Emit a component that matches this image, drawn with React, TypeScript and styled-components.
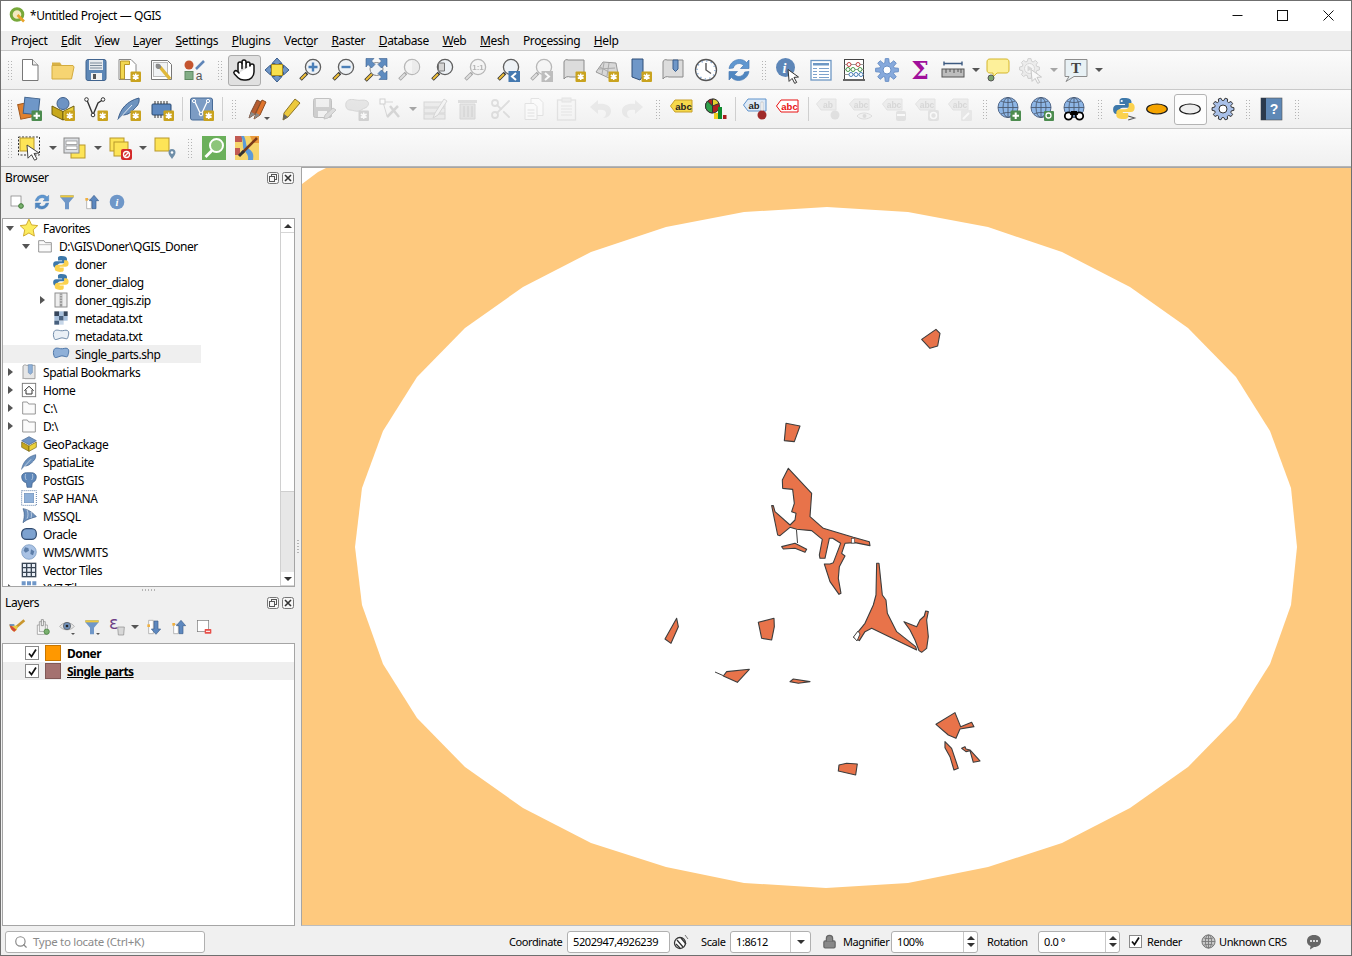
import React from "react";
import styled, { createGlobalStyle } from "styled-components";
import { Hand, Search, Lock, Scissors } from "lucide-react";

const uiFont = `"Noto Sans", "Open Sans", "Liberation Sans", sans-serif`;

const GlobalStyle = createGlobalStyle`
  html, body { margin: 0; padding: 0; background: #f0f0f0; }
  body { font-family: ${uiFont}; font-size: 12px; color: #000; }
  * { box-sizing: border-box; }
`;

// gear outline used by the toolbox, settings and action icons
const gearPath = (cx: number, cy: number, R: number, r: number, n: number) => {
  const pts: string[] = [];
  for (let i = 0; i < n; i++) {
    const a = (i / n) * Math.PI * 2;
    const w = (Math.PI / n) * 0.55;
    [
      [a - w * 1.3, r],
      [a - w * 0.7, R],
      [a + w * 0.7, R],
      [a + w * 1.3, r],
    ].forEach(([t, d]) => {
      pts.push(`${(cx + Math.cos(t) * d).toFixed(2)} ${(cy + Math.sin(t) * d).toFixed(2)}`);
    });
  }
  return `M${pts.join("L")}Z`;
};

const Star = () => (
  <>
    <rect x="13.5" y="13.5" width="10.5" height="10.5" rx="1" fill="#c9a31f" />
    <path d="M18.7 15.5v6.5M15.8 17l5.8 3.5M21.6 17l-5.8 3.5" stroke="#fff" strokeWidth="1.5" />
  </>
);

const Plus = () => (
  <>
    <rect x="13.5" y="13.5" width="10.5" height="10.5" rx="1" fill="#4c8c4f" />
    <path d="M18.7 15.5v6.5M15.5 18.7h6.5" stroke="#fff" strokeWidth="2" />
  </>
);

const Lens = ({ children }: { children?: React.ReactNode }) => (
  <>
    <path d="M9 15L2.5 21.5" stroke="#333" strokeWidth="3.6" />
    <path d="M8 16L3 21" stroke="#eebf3a" strokeWidth="2" />
    <circle cx="15" cy="9" r="7.6" fill="#eef2f6" stroke="#5f5f5f" strokeWidth="1.3" />
    {children}
  </>
);

const Sheet = () => (
  <path d="M2 4c0-2 3-3 4-2h16v17H8c-2-1-5 0-6 2z" fill="#dcdcdc" stroke="#8a8a8a" />
);

const Globe = () => (
  <>
    <circle cx="11" cy="10.5" r="10" fill="#8db6e6" stroke="#52688a" />
    <path d="M1 10.5h20M11 .5v20M4 4c4 2 10 2 14 0M4 17c4-2 10-2 14 0" stroke="#4b5a70" strokeWidth=".9" fill="none" />
    <ellipse cx="11" cy="10.5" rx="5" ry="10" fill="none" stroke="#4b5a70" strokeWidth=".9" />
  </>
);

const Tag = ({ text, fill, line, ink }: { text: string; fill: string; line: string; ink: string }) => (
  <>
    <path d="M.5 9L5 3h17v12H5z" fill={fill} stroke={line} />
    <text x="13.5" y="12.6" fontSize="9.5" fontWeight="700" textAnchor="middle" fill={ink} fontFamily="Liberation Sans">
      {text}
    </text>
  </>
);

const GrayTag = ({ text }: { text: string }) => (
  <>
    <path d="M.5 7L5 2h15v11H5z" fill="#ddd" stroke="#c6c6c6" />
    <text x="12" y="10.6" fontSize="8.5" fontWeight="700" textAnchor="middle" fill="#aaa" fontFamily="Liberation Sans">
      {text}
    </text>
  </>
);

const snake = "M11.5 1C6.5 1 7 3 7 5v2h5v1H4.5C2.5 8 1 9.5 1 12.5S2.5 17 4 17h2.5v-3c0-2 1.5-3.3 3.500-3.3h4.5c2 0 3.5-1.5 3.5-3.2V4.800C18 2.5 16 1 11.5 1z";

const cursor = "M12 11.5l10.5 7.500-4.500.4 2.700 5-2 1-2.600-5-3 3z";
const arrows = "M2 10.5C3 5 7.500 1.500 12.500 1.500c3 0 5.200 1 7 3l2.500-2.500v8.500h-8.500l3-3c-1.200-1.200-2.700-2-4.300-2-3 0-5.200 1.900-5.900 4.500z";

const icons: Record<string, React.ReactNode> = {
  new: (
    <>
      <path d="M4.5 1.5h10L20 7v15.5H4.5z" fill="#fff" stroke="#777" />
      <path d="M14.5 1.5V7H20" fill="#eee" stroke="#777" />
    </>
  ),
  open: (
    <>
      <path d="M1 4.5h8l2 3h11v5H1z" fill="#d8b146" />
      <path d="M1 21V7.5h21L23 9 20.5 21z" fill="#f6d472" stroke="#d2ab3f" />
    </>
  ),
  save: (
    <>
      <rect x="2" y="1.5" width="20" height="21" rx="2" fill="#5d87b6" stroke="#41648f" />
      <rect x="5" y="2" width="14" height="10" fill="#e6eaee" />
      <path d="M6 5h12M6 7.5h12M6 10h12" stroke="#7a8a9a" />
      <rect x="7" y="15" width="11" height="7" fill="#f2f2f2" />
      <rect x="9" y="16" width="3" height="5" fill="#555" />
    </>
  ),
  layout: (
    <>
      <path d="M2 1.5h12l5 5v15H2z" fill="#fff" stroke="#888" />
      <path d="M3.5 3h9v3.5h-5V21h-4z" fill="#f2d750" stroke="#b8962a" />
      <Star />
    </>
  ),
  layoutMgr: (
    <>
      <path d="M1.5 2.5h16l4 4v15h-20z" fill="#fff" stroke="#777" />
      <rect x="3.5" y="4.5" width="14" height="14" fill="#f1f3f5" stroke="#bbb" />
      <path d="M10 9l10 12" stroke="#e0b83a" strokeWidth="3.5" />
      <path d="M6 6c2-1 6 0 5 4l-2 1c-3 0-4-2-3-5z" fill="#8a8a8a" />
    </>
  ),
  style: (
    <>
      <circle cx="6" cy="7" r="4.5" fill="#c4552f" />
      <path d="M13 11L21 3" stroke="#5f86b8" strokeWidth="2.5" />
      <rect x="2" y="13.5" width="8" height="8" fill="#82ad86" stroke="#5e8a62" />
      <text x="16" y="22" fontSize="12" fill="#555" textAnchor="middle" fontFamily="Liberation Sans">a</text>
    </>
  ),
  hand: <Hand width={24} height={24} fill="#fff" stroke="#111" strokeWidth={1.5} />,
  panSel: (
    <>
      <path d="M12 0l5 5.500h-3V8h-4V5.500H7zM12 24l5-5.500h-3V16h-4v2.500H7zM0 12l5.500-5v3H8v4H5.500v3zM24 12l-5.500-5v3H16v4h2.500v3z" fill="#6e95c6" stroke="#3d5f8c" />
      <rect x="6.5" y="6.5" width="11" height="11" fill="#f7e04e" stroke="#a88c20" />
    </>
  ),
  zoomIn: (
    <Lens>
      <path d="M10.5 9h9M15 4.500v9" stroke="#4a7fb8" strokeWidth="2.400" />
    </Lens>
  ),
  zoomOut: (
    <Lens>
      <path d="M10.5 9h9" stroke="#4a7fb8" strokeWidth="2.400" />
    </Lens>
  ),
  zoomFull: (
    <>
      <path d="M9 15L1.5 22.5" stroke="#333" strokeWidth="3.5" />
      <path d="M8 16L2 22" stroke="#eebf3a" strokeWidth="2" />
      <circle cx="12.5" cy="11" r="6.5" fill="#eef2f6" stroke="#888" />
      <path d="M2 .5h8L7.500 3l3.500 3.500L7.500 10 4 6.500 2 9zM23 .5h-8l2.500 2.500L14 6.500l3.500 3.500L21 6.500 23 9zM23 21.500h-8l2.500-2.500L14 15.500l3.500-3.500L21 15.500l2-2.500z" fill="#5f8cc0" stroke="#3a5f8e" strokeWidth=".6" />
    </>
  ),
  zoomSel: (
    <Lens>
      <path d="M15 2a7 7 0 0 1 0 14z" fill="#ffe04a" />
    </Lens>
  ),
  zoomLayer: (
    <Lens>
      <path d="M8.5 5h6v8h-6z" fill="#d5d5d5" stroke="#777" />
    </Lens>
  ),
  native: (
    <Lens>
      <text x="15" y="12" fontSize="8" fontWeight="700" textAnchor="middle" fill="#555" fontFamily="Liberation Sans">1:1</text>
    </Lens>
  ),
  zoomLast: (
    <Lens>
      <rect x="12.5" y="13" width="11.5" height="11" fill="#4579b0" />
      <path d="M20 15l-4 3.500 4 3.500" stroke="#fff" strokeWidth="2" fill="none" />
    </Lens>
  ),
  zoomNext: (
    <Lens>
      <rect x="12.5" y="13" width="11.5" height="11" fill="#4579b0" />
      <path d="M16 15l4 3.500-4 3.500" stroke="#fff" strokeWidth="2" fill="none" />
    </Lens>
  ),
  mapView: (
    <>
      <Sheet />
      <Star />
    </>
  ),
  map3d: (
    <>
      <path d="M1 14L8 4l13 1 2 11-9 4z" fill="#d8d8d8" stroke="#999" />
      <path d="M5 9l14 8M9 5l-2 11M14 5l-2 13M20 10l-16 1" stroke="#aaa" fill="none" />
      <Star />
    </>
  ),
  bookmarkNew: (
    <>
      <path d="M4 1h11v17l-3 4-8-3z" fill="#6f97c8" stroke="#2f4e78" />
      <Star />
    </>
  ),
  bookmarks: (
    <>
      <Sheet />
      <path d="M12 2h5v9l-2.500 2.500L12 11z" fill="#6f97c8" stroke="#3a5f8e" />
    </>
  ),
  clock: (
    <>
      <circle cx="12" cy="12" r="10.5" fill="#fff" stroke="#555" strokeWidth="1.3" />
      <circle cx="12" cy="12" r="9" fill="none" stroke="#6f97c8" strokeWidth="1.2" strokeDasharray="1.2 3.5" />
      <path d="M12 5v7l5 3.500" stroke="#555" strokeWidth="1.4" fill="none" />
    </>
  ),
  refresh: (
    <>
      <path d={arrows} fill="#5f97d0" stroke="#4a7db6" strokeWidth=".7" />
      <path d={arrows} fill="#4f86c0" stroke="#4a7db6" strokeWidth=".7" transform="rotate(180 12 12)" />
    </>
  ),
  identify: (
    <>
      <circle cx="9.5" cy="9.5" r="9.5" fill="#5d86b8" />
      <text x="8.5" y="14.5" fontSize="14" fontWeight="700" fontStyle="italic" textAnchor="middle" fill="#fff" fontFamily="Liberation Serif">i</text>
      <path d={cursor} fill="#fff" stroke="#333" />
    </>
  ),
  table: (
    <>
      <rect x="2" y="2.5" width="20" height="19.5" fill="#fff" stroke="#6d97c4" strokeWidth="1.3" />
      <rect x="4" y="5" width="16" height="2.5" fill="#6d97c4" />
      <path d="M4 10.5h4M10 10.5h10M4 13.5h4M10 13.5h10M4 16.5h4M10 16.5h10M4 19.5h4M10 19.5h10" stroke="#7da2cc" />
    </>
  ),
  abacus: (
    <>
      <rect x="2.5" y="1.5" width="19" height="20" fill="#fff" stroke="#444" />
      <rect x="1" y="21" width="22" height="2" fill="#666" />
      <path d="M2.5 6.500h19M2.5 11.500h19M2.5 16.500h19" stroke="#999" />
      <circle cx="7" cy="6.5" r="2" fill="#fff" stroke="#c04040" />
      <circle cx="16" cy="6.5" r="2" fill="#fff" stroke="#c04040" />
      <circle cx="6" cy="11.5" r="2" fill="#fff" stroke="#4a9a4a" />
      <circle cx="11" cy="11.5" r="2" fill="#fff" stroke="#4a9a4a" />
      <circle cx="18" cy="11.5" r="2" fill="#fff" stroke="#4a9a4a" />
      <circle cx="9" cy="16.5" r="2" fill="#fff" stroke="#4a7fb8" />
      <circle cx="14" cy="16.5" r="2" fill="#fff" stroke="#4a7fb8" />
      <circle cx="19" cy="16.5" r="2" fill="#fff" stroke="#4a7fb8" />
    </>
  ),
  toolbox: (
    <>
      <path d={gearPath(12, 12, 11.5, 7.5, 8)} fill="#86a9dc" stroke="#6a90c6" />
      <circle cx="12" cy="12" r="4" fill="#fff" stroke="#6a90c6" />
    </>
  ),
  sum: (
    <text x="12" y="21" fontSize="25" fontWeight="700" textAnchor="middle" fill="#a0109b" fontFamily="DejaVu Serif">Σ</text>
  ),
  measure: (
    <>
      <path d="M3 5.500h18M3 3.500v4M21 3.500v4" stroke="#3c5a80" strokeWidth="1.4" />
      <rect x="1" y="11" width="22" height="8" fill="#bdbdbd" stroke="#555" />
      <path d="M5 11v4M9 11v3M13 11v4M17 11v3M20 11v4" stroke="#555" />
    </>
  ),
  annotation: (
    <>
      <path d="M4 1h16c2 0 3 1 3 3v8c0 2-1 3-3 3H11l-4 4v-4H4c-2 0-3-1-3-3V4c0-2 1-3 3-3z" fill="#fdf09a" stroke="#d4b62a" />
      <circle cx="5" cy="20" r="3" fill="#7aa36d" stroke="#555" />
    </>
  ),
  action: (
    <>
      <path d={gearPath(10.5, 10.5, 10, 7.5, 8)} fill="#ddd" stroke="#999" />
      <circle cx="10.5" cy="10.5" r="5" fill="#f4f4f4" stroke="#aaa" />
      <path d="M8.5 7.500l5 3-5 3z" fill="#aaa" />
      <path d={cursor} fill="#fff" stroke="#888" />
    </>
  ),
  textAnn: (
    <>
      <path d="M1 1.500h22v17H10l-8 5 3-5H1z" fill="#e8f1f5" stroke="#8c8c8c" />
      <text x="12" y="15" fontSize="15" fontWeight="700" textAnchor="middle" fill="#444" fontFamily="Liberation Serif">T</text>
    </>
  ),
  dataSource: (
    <>
      <rect x="1" y="6" width="15" height="15" fill="#e0812f" stroke="#a0561a" transform="rotate(-12 8 13)" />
      <rect x="6" y="1" width="15" height="16" fill="#6f97c8" stroke="#3f628c" transform="rotate(6 13 9)" />
      <Plus />
    </>
  ),
  newGpkg: (
    <>
      <circle cx="12" cy="6.5" r="6" fill="#6d93c4" stroke="#3f5f8a" />
      <path d="M1 9l11 5.500V23L1 17.500z" fill="#c7a81c" stroke="#6e5d10" />
      <path d="M23 9l-11 5.500V23l11-5.500z" fill="#ecd23c" stroke="#6e5d10" />
      <Star />
    </>
  ),
  newVector: (
    <>
      <path d="M2.500 2l6.500 16L14 6l4.500-3" stroke="#333" strokeWidth="1.4" fill="none" />
      <circle cx="2.5" cy="2.5" r="1.8" fill="#fff" stroke="#333" />
      <circle cx="9" cy="18" r="1.8" fill="#fff" stroke="#333" />
      <circle cx="19" cy="2.5" r="1.8" fill="#fff" stroke="#333" />
      <Star />
    </>
  ),
  feather: (
    <>
      <path d="M1 23C3 12 10 4 22 1c1 6-3 9-5 11-4 5-8 6-12 6z" fill="#6d93bf" stroke="#3d5f8c" />
      <path d="M1 23L15 8" stroke="#dfe8f2" />
    </>
  ),
  featherNew: (
    <>
      <path d="M1 23C3 12 10 4 22 1c1 6-3 9-5 11-4 5-8 6-12 6z" fill="#6d93bf" stroke="#3d5f8c" />
      <path d="M1 23L15 8" stroke="#dfe8f2" />
      <Star />
    </>
  ),
  chip: (
    <>
      <rect x="2" y="7" width="19" height="11" rx="1" fill="#5d88bf" stroke="#2b4a73" />
      <path d="M5 4v3M8 4v3M11 4v3M14 4v3M17 4v3M5 18v3M8 18v3M11 18v3" stroke="#333" />
      <Star />
    </>
  ),
  digitize: (
    <>
      <rect x=".5" y="1" width="22" height="22" rx="2" fill="#7c9cc4" stroke="#466a96" />
      <path d="M4 3l7 15 7-15" stroke="#fff" strokeWidth="1.3" fill="none" />
      <circle cx="4" cy="4" r="1.6" fill="#7c9cc4" stroke="#fff" />
      <circle cx="11" cy="17" r="1.8" fill="#7c9cc4" stroke="#fff" />
      <circle cx="18" cy="4" r="1.6" fill="#7c9cc4" stroke="#fff" />
      <Star />
    </>
  ),
  pencils: (
    <>
      <path d="M3 21l2-6L11 3l4 2-6 12z" fill="#b75d30" stroke="#7a4a30" />
      <path d="M8 22l2-6 6-13 4 2-6 13z" fill="#e0742c" stroke="#8a4a20" />
      <path d="M3 21l2-6 4 2zM8 22l2-6 4 2z" fill="#8a8a8a" />
      <path d="M18 20h6l-3 3z" fill="#555" />
    </>
  ),
  pencil: (
    <>
      <path d="M4 23l1-7L16 2l5 4L9 20z" fill="#ecc93c" stroke="#8c7426" />
      <path d="M4 23l1-6 4 3z" fill="#666" />
    </>
  ),
  saveEdits: (
    <>
      <rect x="1.5" y="1.5" width="18" height="19" rx="2" fill="#999" stroke="#777" />
      <rect x="4" y="2" width="13" height="8" fill="#e4e4e4" />
      <rect x="6" y="14" width="9" height="6" fill="#eee" />
      <path d="M12 22l1-4 8-7 3 2-8 8z" fill="#bbb" stroke="#888" />
    </>
  ),
  addFeature: (
    <>
      <path d="M1 6c1-4 6-4 10-3s8-1 11 1 1 6-2 7-3 2-6 3-6-1-9-1-5-3-4-7z" fill="#ccc" stroke="#aaa" />
      <Star />
    </>
  ),
  vertex: (
    <>
      <path d="M5 5l4 14M5 5h10" stroke="#aaa" fill="none" />
      <rect x="2" y="2" width="5" height="5" fill="#fff" stroke="#999" />
      <path d="M9 20L20 9M12 9l9 11" stroke="#aaa" strokeWidth="2.5" />
    </>
  ),
  modify: (
    <>
      <rect x="1" y="5" width="21" height="5" fill="#ddd" stroke="#aaa" />
      <rect x="1" y="11" width="21" height="5" fill="#ddd" stroke="#aaa" />
      <rect x="1" y="17" width="21" height="5" fill="#ddd" stroke="#aaa" />
      <path d="M10 21l2-5L21 2l3 2-9 14z" fill="#eee" stroke="#aaa" />
    </>
  ),
  trash: (
    <>
      <path d="M2 3h19v3H2z" fill="#c7b9b4" />
      <path d="M4 7h15v15H4z" fill="#d4c9c5" stroke="#b8aaa5" />
      <path d="M8 9v11M12 9v11M16 9v11" stroke="#a89a95" />
    </>
  ),
  cut: <Scissors width={24} height={24} stroke="#bbb" strokeWidth={1.8} />,
  copy: (
    <>
      <path d="M9 1.500h8l4 4v13H9z" fill="#fff" stroke="#c6c6c6" />
      <path d="M3 6.500h9l3 3v13H3z" fill="#fff" stroke="#c6c6c6" />
      <path d="M5.500 13h7M5.500 16h7M5.500 19h7" stroke="#c6c6c6" />
    </>
  ),
  paste: (
    <>
      <rect x="2.5" y="3" width="18" height="20" fill="#f4f4f4" stroke="#c6c6c6" strokeWidth="1.3" />
      <rect x="7" y="1" width="9" height="4" fill="#ddd" stroke="#c6c6c6" />
      <path d="M6 9h11M6 12h11M6 15h11M6 18h11" stroke="#ccc" />
    </>
  ),
  undo: <path d="M10 3L2 10l8 7v-4c4-1 8 0 8 3 0 2-1 4-3 5 5 0 8-3 8-7 0-6-7-8-13-7z" fill="#d6d6d6" />,
  redo: <path d="M14 3l8 7-8 7v-4c-4-1-8 0-8 3 0 2 1 4 3 5-5 0-8-3-8-7 0-6 7-8 13-7z" fill="#d6d6d6" />,
  abc: <Tag text="abc" fill="#f6d94b" line="#c8a02a" ink="#222" />,
  chart: (
    <>
      <circle cx="9.5" cy="9" r="7" fill="#b02020" stroke="#333" />
      <path d="M9.500 9V2a7 7 0 0 1 6.500 4.500z" fill="#e2d431" stroke="#333" />
      <path d="M9.500 9v7a7 7 0 0 1-7-7 7 7 0 0 1 2-5z" fill="#2fa04a" stroke="#333" />
      <rect x="11" y="16" width="4" height="6" fill="#f0d020" />
      <rect x="15" y="10" width="4" height="12" fill="#0e8a2e" />
      <rect x="20" y="18" width="3.5" height="4" fill="#a81e1e" />
    </>
  ),
  abPin: (
    <>
      <path d="M.5 8L5 2h18v12H5z" fill="#dfeaf6" stroke="#5f93cc" />
      <text x="11" y="11.5" fontSize="9.5" fontWeight="700" textAnchor="middle" fill="#222" fontFamily="Liberation Sans">ab</text>
      <path d="M18 5h2v10h-2z" fill="#fff" stroke="#aaa" strokeWidth=".5" />
      <circle cx="19" cy="18" r="4.5" fill="#a02a2a" />
    </>
  ),
  abcRed: <Tag text="abc" fill="#fff" line="#e81010" ink="#e81010" />,
  abGrayPin: (
    <>
      <GrayTag text="ab" />
      <circle cx="19" cy="18" r="4.5" fill="#c8c2c2" />
    </>
  ),
  abcEye: (
    <>
      <GrayTag text="abc" />
      <path d="M8 19c3-4 11-4 15 0-4 4-12 4-15 0z" fill="#eee" stroke="#bbb" />
      <circle cx="15.5" cy="19" r="2" fill="#bbb" />
    </>
  ),
  abcPlus: (
    <>
      <GrayTag text="abc" />
      <rect x="14" y="14" width="10" height="10" rx="2" fill="#c8c8c8" />
      <path d="M15 18h8" stroke="#fff" strokeWidth="2" />
    </>
  ),
  abcTurn: (
    <>
      <GrayTag text="abc" />
      <rect x="13" y="13" width="11" height="11" rx="2" fill="#c8c8c8" />
      <circle cx="18.5" cy="18.5" r="3" fill="none" stroke="#fff" strokeWidth="1.5" />
    </>
  ),
  abcEdit: (
    <>
      <GrayTag text="abc" />
      <rect x="13" y="13" width="11" height="11" rx="1" fill="#d8d4c8" />
      <path d="M15 22l6-6" stroke="#fff" strokeWidth="2" />
    </>
  ),
  wmsAdd: (
    <>
      <Globe />
      <Plus />
    </>
  ),
  wmsFind: (
    <>
      <Globe />
      <rect x="14" y="14" width="10" height="10" rx="1" fill="#4c8c4f" />
      <circle cx="18.5" cy="18.5" r="2.5" fill="none" stroke="#fff" strokeWidth="1.3" />
    </>
  ),
  wmsSearch: (
    <>
      <Globe />
      <circle cx="5.5" cy="19" r="3.7" fill="#fff" stroke="#000" strokeWidth="1.8" />
      <circle cx="16.5" cy="19" r="3.7" fill="#fff" stroke="#000" strokeWidth="1.8" />
      <path d="M8 14h6l1 4H7z" fill="#000" />
    </>
  ),
  python: (
    <g transform="scale(1.08 1)">
      <path d={snake} fill="#3d78aa" />
      <path d={snake} fill="#fbd24e" transform="rotate(180 11 11.5)" />
      <circle cx="9" cy="4" r="1" fill="#fff" />
      <path d="M15 19l6 2-6 2" stroke="#555" fill="none" />
    </g>
  ),
  ellipseOn: <ellipse cx="12" cy="12" rx="10.3" ry="5" fill="#f5a400" stroke="#1a1a1a" strokeWidth="1.2" />,
  ellipseOff: <ellipse cx="12" cy="12" rx="10.3" ry="5" fill="#eee" stroke="#1a1a1a" strokeWidth="1.2" />,
  settings: (
    <>
      <path d={gearPath(12, 12, 11, 8.5, 10)} fill="#a9c0e8" stroke="#333" />
      <circle cx="12" cy="12" r="4" fill="#fff" stroke="#333" />
    </>
  ),
  help: (
    <>
      <rect x="1" y="1" width="21" height="22" fill="#5e88b6" stroke="#555" strokeWidth=".6" />
      <rect x="1" y="1" width="5" height="22" fill="#2b3a4d" />
      <text x="14" y="17" fontSize="14" fontWeight="700" textAnchor="middle" fill="#fff" fontFamily="Liberation Sans">?</text>
    </>
  ),
  select: (
    <>
      <rect x=".5" y="1" width="21" height="18" fill="none" stroke="#333" strokeDasharray="2 1.5" />
      <rect x="2" y="2" width="14" height="13" fill="#fde457" stroke="#b8982a" />
      <path d="M9 9l12 8-5 .5 3 5.500-2.500 1.200-3-5.500-3.500 3.500z" fill="#fff" stroke="#444" />
    </>
  ),
  selectForm: (
    <>
      <rect x="8" y="9" width="14" height="13" fill="#fde457" stroke="#b8982a" />
      <rect x="1" y="2" width="15" height="15" fill="#dcdfe3" stroke="#888" />
      <rect x="3" y="5" width="11" height="3.5" fill="#fff" stroke="#888" strokeWidth=".7" />
      <rect x="3" y="10" width="11" height="3.5" fill="#fff" stroke="#888" strokeWidth=".7" />
    </>
  ),
  deselect: (
    <>
      <rect x="2" y="2" width="14" height="13" fill="#fde457" stroke="#b8982a" />
      <rect x="6" y="6" width="14" height="14" fill="#fde457" stroke="#b8982a" />
      <rect x="13" y="13" width="11" height="11" rx="2" fill="#d42a2a" />
      <circle cx="18.5" cy="18.5" r="3" fill="none" stroke="#fff" strokeWidth="1.3" />
      <path d="M16.500 20.500l4-4" stroke="#fff" strokeWidth="1.3" />
    </>
  ),
  selectLoc: (
    <>
      <rect x="2" y="2" width="14" height="13" fill="#fde457" stroke="#b8982a" />
      <path d="M19 23c-2-3-3.500-4.500-3.500-6.500a3.500 3.500 0 0 1 7 0c0 2-1.500 3.500-3.500 6.500z" fill="#6f8ea8" />
      <circle cx="19" cy="16.5" r="1.3" fill="#fff" />
    </>
  ),
  locator: (
    <>
      <rect width="24" height="24" fill="#6bb05b" />
      <circle cx="14.5" cy="9.5" r="6.5" fill="#8dc57a" stroke="#fff" strokeWidth="2" />
      <path d="M10 14.500L3.500 21" stroke="#fff" strokeWidth="2.8" />
    </>
  ),
  mapEdit: (
    <>
      <rect width="24" height="24" fill="#f6d56b" />
      <path d="M0 0h7v6H0zM0 12h5v7H0z" fill="#c15a52" />
      <path d="M9 0c3 6 1 10 5 13s5 5 4 11h-5c1-5-2-7-4-10S9 5 6 0z" fill="#5c9bd8" />
      <path d="M15 0h9v7h-6z" fill="#e99a3c" />
      <path d="M7 17L22 2" stroke="#7a3a1a" strokeWidth="2.6" />
      <path d="M9 15l-5 5" stroke="#333" strokeWidth="3" />
    </>
  ),
  addSmall: (
    <>
      <rect x="3" y="3" width="15" height="15" fill="#fff" stroke="#777" />
      <circle cx="18" cy="18" r="3.5" fill="#7ab06f" stroke="#3d7a34" strokeWidth="1.5" />
    </>
  ),
  filter: (
    <>
      <path d="M2 2h20v3l-7 8v10h-6V13L2 5z" fill="#6f97c8" />
      <path d="M2 2h20v3H2z" fill="#f0c93a" />
    </>
  ),
  collapse: (
    <>
      <path d="M4 8h7v14H4z" fill="#fff" stroke="#999" />
      <path d="M15 2l7 8h-4v12h-6V10H8z" fill="#5d88bf" stroke="#3d5f8c" />
      <rect x="2" y="6" width="4" height="4" fill="#f0b040" />
    </>
  ),
  expand: (
    <>
      <path d="M4 2h7v20H4z" fill="#fff" stroke="#999" />
      <path d="M15 23l7-8h-4V3h-6v12H8z" fill="#5d88bf" stroke="#3d5f8c" />
      <rect x="2" y="8" width="4" height="4" fill="#f0b040" />
    </>
  ),
  info: (
    <>
      <circle cx="12" cy="12" r="11" fill="#6f97c8" />
      <text x="12" y="18" fontSize="16" fontWeight="700" fontStyle="italic" textAnchor="middle" fill="#fff" fontFamily="Liberation Serif">i</text>
    </>
  ),
  brush: (
    <>
      <path d="M23 2L11 12" stroke="#c9962e" strokeWidth="4" />
      <path d="M13 11L1 8c-1 4 3 10 7 11l4-3z" fill="#e8cb42" />
      <path d="M1 8l10 8-3 3C4 18 1 12 1 8z" fill="#d24a3a" />
      <path d="M8 9l-7 0" stroke="#5d88bf" strokeWidth="2.5" />
    </>
  ),
  addGroup: (
    <>
      <path d="M5 9h15v14H5z" fill="#fff" stroke="#888" />
      <path d="M8 4h9v15H8z" fill="#eee" stroke="#888" />
      <path d="M11 1h3v9h-3z" fill="#fff" stroke="#666" />
      <circle cx="19" cy="19" r="4" fill="#7ab06f" stroke="#3d7a34" />
    </>
  ),
  eye: (
    <>
      <path d="M1 11c5-7 17-7 22 0-5 7-17 7-22 0z" fill="#e6e6e6" stroke="#999" />
      <circle cx="12" cy="10.5" r="5.5" fill="#6f8fb8" stroke="#555" />
      <circle cx="12" cy="10.5" r="2" fill="#222" />
      <path d="M18 21h6l-3 3z" fill="#555" />
    </>
  ),
  filterAdv: (
    <>
      <path d="M2 2h20v3l-7 8v10h-6V13L2 5z" fill="#6f97c8" />
      <path d="M2 2h20v3H2z" fill="#f0c93a" />
      <path d="M18 21h6l-3 3z" fill="#555" />
    </>
  ),
  epsilon: (
    <>
      <text x="7" y="15" fontSize="26" textAnchor="middle" fill="#6d3f86" fontFamily="DejaVu Sans">ε</text>
      <path d="M13 12h10l-1 12h-8z" fill="#d8d8d8" stroke="#888" />
    </>
  ),
  removeLayer: (
    <>
      <rect x="2" y="2" width="17" height="17" fill="#fff" stroke="#777" />
      <rect x="13" y="15" width="10" height="7" rx="1" fill="#e8504a" />
      <path d="M15 18.500h6" stroke="#fff" strokeWidth="1.6" />
    </>
  ),
  star: (
    <path
      d="M12 1l3.300 7.200 7.700.9-5.700 5.300 1.500 7.800L12 18.300l-6.800 3.900 1.500-7.800L1 9.100l7.700-.9z"
      fill="#fcec5e"
      stroke="#d0a92a"
      strokeWidth="1.2"
      transform="translate(-2.5 -2.500) scale(1.2)"
    />
  ),
  folder: <path d="M2.500 21V3h7l2 3h10v15z" fill="#fbfbfb" stroke="#8f8f8f" strokeWidth="1.4" />,
  folderFav: (
    <>
      <path d="M2.500 21V4h8l2 3h9v14z" fill="#fbfbfb" stroke="#8f8f8f" strokeWidth="1.4" />
      <path d="M3 10h18" stroke="#bbb" strokeWidth="1.4" />
    </>
  ),
  pyFile: (
    <g transform="translate(-1 -1) scale(1.22 1.1)">
      <path d={snake} fill="#3d78aa" />
      <path d={snake} fill="#fbd24e" transform="rotate(180 10.5 11.8)" />
    </g>
  ),
  zip: (
    <>
      <rect x="3" y="1.5" width="18" height="21" fill="#eee" stroke="#888" strokeWidth="1.4" />
      <rect x="10" y="2" width="4" height="20" fill="#999" />
      <path d="M10 5h4M10 9h4M10 13h4M10 17h4" stroke="#eee" />
    </>
  ),
  raster: (
    <>
      <rect x="2" y="2" width="7" height="7" fill="#36465c" />
      <rect x="9" y="2" width="7" height="7" fill="#a8c0dc" />
      <rect x="16" y="2" width="6" height="7" fill="#36465c" />
      <rect x="2" y="9" width="7" height="7" fill="#a8c0dc" />
      <rect x="9" y="9" width="7" height="7" fill="#48607e" />
      <rect x="16" y="9" width="6" height="7" fill="#a8c0dc" />
      <rect x="2" y="16" width="7" height="6" fill="#48607e" />
      <rect x="9" y="16" width="7" height="6" fill="#c6d6e8" />
    </>
  ),
  blobPale: <path d="M1 7c1-5 6-4 10-3s8-2 11 0 1 8 0 11-6-1-10 0-9 4-10 1-2-5-1-9z" fill="#eaf0f6" stroke="#6f8aa8" strokeWidth="1.5" />,
  blob: <path d="M1 7c1-5 6-4 10-3s8-2 11 0 1 8 0 11-6-1-10 0-9 4-10 1-2-5-1-9z" fill="#8fb0d8" stroke="#4f77a8" strokeWidth="1.5" />,
  bookmarkTree: (
    <>
      <path d="M3 3c1-2 4-2 5-1h13v20H6c-2-1-4 0-3 0z" fill="#e6e6e6" stroke="#9a9a9a" strokeWidth="1.4" />
      <path d="M11 1h6v12l-3 2.500-3-2.500z" fill="#8fb0d8" stroke="#6f8fb4" />
    </>
  ),
  home: (
    <>
      <rect x="2" y="2" width="20" height="20" fill="#fff" stroke="#777" strokeWidth="1.4" />
      <path d="M5 13l7-6.500 7 6.500M7.500 12v6h9v-6" fill="none" stroke="#333" strokeWidth="1.5" />
    </>
  ),
  gpkg: (
    <>
      <path d="M12 1l11 6-11 6L1 7z" fill="#6d93c4" stroke="#3f5f8a" />
      <path d="M1 9l11 6v8L1 17z" fill="#c7a81c" stroke="#6e5d10" />
      <path d="M23 9l-11 6v8l11-6z" fill="#ecd23c" stroke="#6e5d10" />
    </>
  ),
  elephant: (
    <>
      <path d="M1 7c0-4 4-6 7-6h8c3 0 7 2 7 6s-2 7-4 8l-2 1-1 7h-7l-1-7-3-1c-2-1-4-4-4-8z" fill="#5d86b8" stroke="#3a5a85" />
      <path d="M7 3c-1 3-1 6 1 9M17 3c1 3 1 6-1 9" stroke="#d6e2f0" fill="none" />
    </>
  ),
  hana: (
    <>
      <rect x="1" y="1" width="22" height="22" fill="none" stroke="#5d7ea8" strokeDasharray="1.5 1.5" strokeWidth="1.5" />
      <rect x="5" y="5" width="14" height="14" fill="#8fb0d8" stroke="#6d90bc" />
    </>
  ),
  mssql: (
    <>
      <path d="M3 1c7 1 14 5 20 12-6 2-13 3-20 9 2-7 3-14 0-21z" fill="#6d90bc" stroke="#3a5a85" />
      <path d="M9 3c2 4 2 9 0 13M15 6c1 3 1 6 0 9" stroke="#dbe6f2" fill="none" />
    </>
  ),
  oracle: <rect x="1" y="4" width="22" height="16" rx="7" fill="#7da2d0" stroke="#304a6e" strokeWidth="1.8" />,
  wms: (
    <>
      <circle cx="12" cy="12" r="11" fill="#a9c2e4" stroke="#6d8fb8" />
      <path d="M6 5l5 1 1 4-5 3-3-3zM15 8l5 3-2 6-4-2z" fill="#5d7ea8" />
    </>
  ),
  grid: (
    <>
      <rect x="2" y="2" width="20" height="20" fill="#e8eef6" stroke="#3a4654" strokeWidth="2" />
      <path d="M8.500 2v20M15.500 2v20M2 8.500h20M2 15.500h20" stroke="#3a4654" strokeWidth="2" />
    </>
  ),
  xyz: <path d="M1 2h6v6H1zM9 2h6v6H9zM17 2h6v6h-6z" fill="#6f97c8" />,
};

const IconSvg = styled.svg<{ $dim?: boolean }>`
  display: block;
  overflow: visible;
  flex: none;
  ${(p) => (p.$dim ? "filter: grayscale(1) opacity(.42);" : "")}
`;

const Icon = ({ name, size = 24, dim }: { name: string; size?: number; dim?: boolean }) => (
  <IconSvg viewBox="0 0 24 24" width={size} height={size} $dim={dim}>
    {icons[name]}
  </IconSvg>
);

const Window = styled.div`
  width: 1352px;
  height: 956px;
  display: flex;
  flex-direction: column;
  border: 1px solid #6f6f6f;
  background: #f0f0f0;
  overflow: hidden;
`;

const TitleBar = styled.div`
  height: 30px;
  flex: none;
  display: flex;
  align-items: center;
  background: #fff;
  padding: 0 0 2px 8px;
`;

const TitleText = styled.span`
  margin-left: 5px;
  font-size: 12px;
  letter-spacing: -0.42px;
`;

const WindowButtons = styled.div`
  margin-left: auto;
  display: flex;
  height: 100%;
`;

const WindowButton = styled.div`
  width: 45.5px;
  display: flex;
  align-items: center;
  justify-content: center;
`;

const MenuBar = styled.div`
  height: 19px;
  flex: none;
  display: flex;
  align-items: center;
  gap: 13.7px;
  padding-left: 10px;
  background: #eeeeee;
  font-size: 12px;
  letter-spacing: -0.4px;
`;

const MenuLabel = styled.span`
  white-space: nowrap;
  u { text-underline-offset: 1px; }
`;

const ToolRow = styled.div<{ $last?: boolean }>`
  height: 39px;
  flex: none;
  display: flex;
  align-items: center;
  border-top: 1px solid #c9c9c9;
  ${(p) => (p.$last ? "border-bottom: 1px solid #b5b5b5;" : "")}
  background: linear-gradient(#fbfbfb, #f0f0f0);
`;

const GripBox = styled.div<{ $lead?: boolean }>`
  width: ${(p) => (p.$lead ? 12.5 : 16)}px;
  flex: none;
  display: flex;
  justify-content: ${(p) => (p.$lead ? "flex-end" : "center")};
  padding-right: ${(p) => (p.$lead ? 2 : 0)}px;
`;

const GripDots = styled.div`
  width: 5px;
  height: 20px;
  background-image: radial-gradient(circle, #b4b4b4 0.8px, transparent 0.9px);
  background-size: 3px 3px;
`;

const ToolBtn = styled.div<{ $state?: "down" | "on" }>`
  width: 33px;
  height: 31px;
  flex: none;
  display: flex;
  align-items: center;
  justify-content: center;
  border-radius: 3px;
  border: 1px solid transparent;
  ${(p) => p.$state === "down" && "background: #e0e0e0; border-color: #acacac;"}
  ${(p) => p.$state === "on" && "background: #fdfdfd; border-color: #b4b4b4;"}
`;

const ArrowBox = styled.div<{ $faded?: boolean }>`
  width: 12px;
  flex: none;
  display: flex;
  justify-content: center;
  ${(p) => (p.$faded ? "opacity: 0.5;" : "")}
`;

const DropArrow = styled.span`
  width: 0;
  height: 0;
  border-left: 4px solid transparent;
  border-right: 4px solid transparent;
  border-top: 4px solid #555;
`;

const Separator = styled.div`
  width: 7px;
  height: 24px;
  flex: none;
  display: flex;
  justify-content: center;
  &::after {
    content: "";
    width: 1px;
    background: #cfcfcf;
  }
`;

type Tool = string | { n: string; d?: boolean; s?: "down" | "on" };

const row1: Tool[] = [
  "|<", "new", "open", "save", "layout", "layoutMgr", "style", "|",
  { n: "hand", s: "down" }, "panSel", "zoomIn", "zoomOut", "zoomFull",
  { n: "zoomSel", d: true }, "zoomLayer", { n: "native", d: true }, "zoomLast",
  { n: "zoomNext", d: true }, "mapView", "map3d", "bookmarkNew", "bookmarks", "clock", "refresh", "|",
  "identify", "table", "abacus", "toolbox", "sum", "measure", "v", "annotation",
  { n: "action", d: true }, "vd", "textAnn", "v",
];

const row2: Tool[] = [
  "|<", "dataSource", "newGpkg", "newVector", "featherNew", "chip", "/", "digitize", "/", "|",
  "pencils", "pencil", { n: "saveEdits", d: true }, { n: "addFeature", d: true },
  { n: "vertex", d: true }, "vd", { n: "modify", d: true }, { n: "trash", d: true },
  { n: "cut", d: true }, { n: "copy", d: true }, { n: "paste", d: true },
  { n: "undo", d: true }, { n: "redo", d: true }, "|",
  "abc", "chart", "/", "abPin", "abcRed", "/",
  { n: "abGrayPin", d: true }, { n: "abcEye", d: true }, { n: "abcPlus", d: true },
  { n: "abcTurn", d: true }, { n: "abcEdit", d: true }, "|",
  "wmsAdd", "wmsFind", "wmsSearch", "|", "python", "ellipseOn", { n: "ellipseOff", s: "on" }, "settings", "|", "help", "|",
];

const row3: Tool[] = [
  "|<", "select", "v", "selectForm", "v", "deselect", "v", "selectLoc", "|", "locator", "mapEdit",
];

const renderTool = (t: Tool, i: number) => {
  if (t === "|<" || t === "|") {
    return (
      <GripBox key={i} $lead={t === "|<"}>
        <GripDots />
      </GripBox>
    );
  }
  if (t === "/") return <Separator key={i} />;
  if (t === "v" || t === "vd") {
    return (
      <ArrowBox key={i} $faded={t === "vd"}>
        <DropArrow />
      </ArrowBox>
    );
  }
  const tool = typeof t === "string" ? { n: t } : t;
  return (
    <ToolBtn key={i} $state={tool.s}>
      <Icon name={tool.n} dim={tool.d} />
    </ToolBtn>
  );
};

const Main = styled.div`
  flex: 1;
  min-height: 0;
  display: flex;
`;

const Sidebar = styled.div`
  width: 294px;
  flex: none;
  display: flex;
  flex-direction: column;
  padding-left: 1px;
`;

const DockHeader = styled.div`
  height: 23px;
  flex: none;
  display: flex;
  align-items: center;
  padding: 0 0 2px 3px;
  font-size: 12px;
  letter-spacing: -0.4px;
`;

const DockButtons = styled.div`
  margin-left: auto;
  display: flex;
  gap: 1px;
`;

const DockButton = styled.div`
  width: 14px;
  height: 14px;
  display: flex;
  align-items: center;
  justify-content: center;
`;

const DockTools = styled.div`
  height: 24px;
  flex: none;
  display: flex;
  align-items: center;
  padding-left: 2px;
`;

const DockTool = styled.div`
  width: 25px;
  flex: none;
  display: flex;
  justify-content: center;
`;

const TreeBox = styled.div<{ $grow?: boolean }>`
  display: flex;
  background: #fff;
  border: 1px solid #a5a5a5;
  margin-top: 4px;
  overflow: hidden;
  ${(p) => (p.$grow ? "flex: 1; min-height: 0;" : "height: 369px; flex: none;")}
`;

const TreeBody = styled.div`
  flex: 1;
  min-width: 0;
  overflow: hidden;
`;

const TreeRow = styled.div<{ $level: number; $selected?: boolean }>`
  height: 18px;
  width: 198px;
  display: flex;
  align-items: center;
  padding-left: ${(p) => p.$level * 16}px;
  white-space: nowrap;
  font-size: 12px;
  letter-spacing: -0.45px;
  ${(p) => (p.$selected ? "background: #efefef;" : "")}
`;

const Expander = styled.div`
  width: 14px;
  flex: none;
  display: flex;
  justify-content: center;
`;

const TriDown = styled.span`
  border-left: 4.5px solid transparent;
  border-right: 4.5px solid transparent;
  border-top: 5px solid #555;
`;

const TriRight = styled.span`
  border-top: 4.5px solid transparent;
  border-bottom: 4.5px solid transparent;
  border-left: 5px solid #555;
`;

const TreeIcon = styled.div`
  margin: 0 6px 0 4px;
  flex: none;
`;

const Scrollbar = styled.div`
  width: 14px;
  flex: none;
  display: flex;
  flex-direction: column;
  background: #e7e7e7;
  border-left: 1px solid #d0d0d0;
`;

const ScrollArrow = styled.div`
  height: 14px;
  flex: none;
  display: flex;
  align-items: center;
  justify-content: center;
  background: #fff;
  border-bottom: 1px solid #d6d6d6;
`;

const ScrollThumb = styled.div`
  height: 259px;
  background: #fff;
  border-bottom: 1px solid #cfcfcf;
`;

const ScrollFill = styled.div`
  flex: 1;
`;

const UpTri = styled.span`
  border-left: 4px solid transparent;
  border-right: 4px solid transparent;
  border-bottom: 4px solid #333;
`;

const DownTri = styled.span`
  border-left: 4px solid transparent;
  border-right: 4px solid transparent;
  border-top: 4px solid #333;
`;

const Splitter = styled.div`
  height: 5px;
  flex: none;
  display: flex;
  align-items: center;
  justify-content: center;
  &::after {
    content: "";
    width: 16px;
    height: 2px;
    background-image: radial-gradient(circle, #b4b4b4 0.8px, transparent 0.9px);
    background-size: 3px 2px;
  }
`;

const LayerRow = styled.div<{ $selected?: boolean }>`
  height: 18px;
  display: flex;
  align-items: center;
  padding-left: 22px;
  font-size: 12px;
  font-weight: 700;
  letter-spacing: -0.5px;
  ${(p) => (p.$selected ? "background: #efefef;" : "")}
`;

const CheckBox = styled.div`
  width: 14px;
  height: 14px;
  flex: none;
  background: #fff;
  border: 1px solid #8a8a8a;
  display: flex;
  align-items: center;
  justify-content: center;
`;

const Swatch = styled.div<{ $color: string }>`
  width: 16px;
  height: 16px;
  flex: none;
  margin: 0 6px;
  background: ${(p) => p.$color};
  border: 1px solid rgba(0, 0, 0, 0.22);
`;

const CanvasGap = styled.div`
  width: 6px;
  flex: none;
  display: flex;
  align-items: center;
  justify-content: center;
  &::after {
    content: "";
    width: 2px;
    height: 16px;
    background-image: radial-gradient(circle, #b4b4b4 0.8px, transparent 0.9px);
    background-size: 2px 3px;
  }
`;

const Canvas = styled.div`
  flex: 1;
  min-width: 0;
  border-left: 1px solid #a5a5a5;
  border-top: 1px solid #a5a5a5;
  border-bottom: 1px solid #bdbdbd;
`;

const MapSvg = styled.svg`
  display: block;
  width: 100%;
  height: 100%;
`;

const StatusBar = styled.div`
  height: 29px;
  flex: none;
  display: flex;
  align-items: center;
  padding: 2px 0 0 4px;
  font-size: 11px;
  letter-spacing: -0.4px;
`;

const Locator = styled.div`
  width: 200px;
  height: 22px;
  flex: none;
  display: flex;
  align-items: center;
  gap: 5px;
  padding-left: 8px;
  margin-right: 304px;
  background: #fff;
  border: 1px solid #b0b0b0;
  border-radius: 3px;
  color: #8a8a8a;
  font-size: 11.5px;
  letter-spacing: -0.3px;
`;

const StatusLabel = styled.span<{ $w: number; $ml?: number }>`
  width: ${(p) => p.$w}px;
  margin-left: ${(p) => p.$ml ?? 0}px;
  flex: none;
  white-space: nowrap;
`;

const StatusIcon = styled.div<{ $w: number; $ml: number }>`
  width: ${(p) => p.$w}px;
  margin-left: ${(p) => p.$ml}px;
  flex: none;
  display: flex;
  justify-content: center;
`;

const Field = styled.div<{ $w: number; $ml: number }>`
  width: ${(p) => p.$w}px;
  margin-left: ${(p) => p.$ml}px;
  height: 22px;
  flex: none;
  display: flex;
  align-items: center;
  background: #fff;
  border: 1px solid #b0b0b0;
  border-radius: 3px;
  overflow: hidden;
`;

const FieldText = styled.span`
  flex: 1;
  padding-left: 5px;
  white-space: nowrap;
`;

const SpinCol = styled.div`
  width: 14px;
  height: 100%;
  flex: none;
  display: flex;
  flex-direction: column;
  align-items: center;
  justify-content: center;
  gap: 3px;
  border-left: 1px solid #c8c8c8;
`;

const ComboDrop = styled.div`
  width: 20px;
  height: 100%;
  flex: none;
  display: flex;
  align-items: center;
  justify-content: center;
  border-left: 1px solid #c8c8c8;
`;

const RenderCheck = styled(CheckBox)`
  width: 13px;
  height: 13px;
  margin-left: 9px;
`;

const menus = ["Pro&ject", "&Edit", "&View", "&Layer", "&Settings", "&Plugins", "Vect&or", "&Raster", "&Database", "&Web", "&Mesh", "Pro&cessing", "&Help"];

const Menu = ({ text }: { text: string }) => {
  const [a, b] = text.split("&");
  return (
    <MenuLabel>
      {a}
      <u>{b[0]}</u>
      {b.slice(1)}
    </MenuLabel>
  );
};

const tree: { level: number; open?: boolean; closed?: boolean; icon: string; label: string; selected?: boolean }[] = [
  { level: 0, open: true, icon: "star", label: "Favorites" },
  { level: 1, open: true, icon: "folderFav", label: "D:\\GIS\\Doner\\QGIS_Doner" },
  { level: 2, icon: "pyFile", label: "doner" },
  { level: 2, icon: "pyFile", label: "doner_dialog" },
  { level: 2, closed: true, icon: "zip", label: "doner_qgis.zip" },
  { level: 2, icon: "raster", label: "metadata.txt" },
  { level: 2, icon: "blobPale", label: "metadata.txt" },
  { level: 2, icon: "blob", label: "Single_parts.shp", selected: true },
  { level: 0, closed: true, icon: "bookmarkTree", label: "Spatial Bookmarks" },
  { level: 0, closed: true, icon: "home", label: "Home" },
  { level: 0, closed: true, icon: "folder", label: "C:\\" },
  { level: 0, closed: true, icon: "folder", label: "D:\\" },
  { level: 0, icon: "gpkg", label: "GeoPackage" },
  { level: 0, icon: "feather", label: "SpatiaLite" },
  { level: 0, icon: "elephant", label: "PostGIS" },
  { level: 0, icon: "hana", label: "SAP HANA" },
  { level: 0, icon: "mssql", label: "MSSQL" },
  { level: 0, icon: "oracle", label: "Oracle" },
  { level: 0, icon: "wms", label: "WMS/WMTS" },
  { level: 0, icon: "grid", label: "Vector Tiles" },
  { level: 0, closed: true, icon: "xyz", label: "XYZ Tiles" },
];

const FloatIcon = () => (
  <svg width="12" height="12" viewBox="0 0 12 12">
    <rect x=".5" y=".5" width="11" height="11" rx="2" fill="#f6f6f6" stroke="#777" />
    <rect x="4.5" y="2.5" width="5" height="5" fill="none" stroke="#555" />
    <rect x="2.5" y="4.5" width="5" height="5" fill="#f6f6f6" stroke="#555" />
  </svg>
);

const CloseIcon = () => (
  <svg width="12" height="12" viewBox="0 0 12 12">
    <rect x=".5" y=".5" width="11" height="11" rx="2" fill="#f6f6f6" stroke="#777" />
    <path d="M3 3l6 6M9 3l-6 6" stroke="#333" strokeWidth="1.6" />
  </svg>
);

const CheckMark = () => (
  <svg width="11" height="11" viewBox="0 0 11 11">
    <path d="M2 5.500l2.500 3L9 1.500" fill="none" stroke="#111" strokeWidth="1.7" />
  </svg>
);

const DockTitle = ({ title }: { title: string }) => (
  <DockHeader>
    {title}
    <DockButtons>
      <DockButton>
        <FloatIcon />
      </DockButton>
      <DockButton>
        <CloseIcon />
      </DockButton>
    </DockButtons>
  </DockHeader>
);

const orangeRing =
  "355,547 362,488 383,431 417,377 465,328 523,287 591,252 666,227 744,212 827,207 908,212 988,227 1062,252 1130,287 1188,328 1236,377 1270,431 1291,488 1297,547 1291,605 1270,664 1236,718 1188,767 1130,808 1062,843 988,867 908,883 826,888 744,883 666,867 591,843 523,808 465,767 417,718 383,664 362,605";

// polygons measured from 3x crops, each group keeps the crop's own origin
const partsA = [
  "145,55 215,130 210,200 250,235 300,250 340,262 388,275 390,287 345,278 315,280 305,310 315,318 298,350 295,385 303,430 297,433 270,395 253,342 270,342 280,338 302,280 278,265 268,265 255,325 240,325 238,315 247,268 215,242 170,238 150,232 120,257 113,255 95,167 100,167 105,185 150,225 165,210 168,190 155,185 163,160 158,118 128,115 127,90",
  "125,290 165,280 200,298 195,307 165,295 130,297",
  "410,340 417,340 427,435 438,450 442,490 470,545 527,590 530,600 395,535 375,545 358,572 341,562 375,520 400,465 408,435",
  "492,515 530,530 540,510 553,498 557,483 565,485 560,510 565,560 560,595 545,607 537,602 525,570 510,540",
  "55,517 102,505 103,530 95,570 65,565",
];

const partsB = [
  "80,55 85,80 63,130 45,117",
  "220,228 230,215 298,208 262,247",
  "420,245 430,237 480,245 445,250",
  "858,373 915,338 932,380 965,367 972,380 930,387 918,415 895,405",
  "885,425 905,445 925,505 912,510 900,470 885,443",
  "935,445 945,440 948,447 960,450 990,483 970,487 960,452 948,455",
  "567,495 590,490 622,492 617,525 565,513",
];

const partsC = ["485,58 528,28 540,40 533,78 510,85", "78,310 120,318 103,365 73,362"];

const Parts = ({ x, y, list }: { x: number; y: number; list: string[] }) => (
  <g transform={`translate(${x} ${y}) scale(.3333)`} fill="#e8734a" stroke="#3d3d3d" strokeWidth="3.3" strokeLinejoin="round">
    {list.map((p, i) => (
      <polygon key={i} points={p} />
    ))}
  </g>
);

export default function App() {
  return (
    <Window>
      <GlobalStyle />
      <TitleBar>
        <svg width="16" height="16" viewBox="0 0 16 16">
          <circle cx="8" cy="7.5" r="5.8" fill="#f4e9c0" stroke="#77a83a" strokeWidth="3" />
          <path d="M8.500 8l6.500 6.500" stroke="#e8a32a" strokeWidth="2.6" />
        </svg>
        <TitleText>*Untitled Project — QGIS</TitleText>
        <WindowButtons>
          <WindowButton>
            <svg width="11" height="11" viewBox="0 0 11 11">
              <path d="M.5 5.500h10" stroke="#111" />
            </svg>
          </WindowButton>
          <WindowButton>
            <svg width="11" height="11" viewBox="0 0 11 11">
              <rect x=".5" y=".5" width="10" height="10" fill="none" stroke="#111" />
            </svg>
          </WindowButton>
          <WindowButton>
            <svg width="11" height="11" viewBox="0 0 11 11">
              <path d="M.5 .5l10 10M10.500 .5l-10 10" stroke="#111" />
            </svg>
          </WindowButton>
        </WindowButtons>
      </TitleBar>

      <MenuBar>
        {menus.map((m) => (
          <Menu key={m} text={m} />
        ))}
      </MenuBar>

      <ToolRow>{row1.map(renderTool)}</ToolRow>
      <ToolRow>{row2.map(renderTool)}</ToolRow>
      <ToolRow $last>{row3.map(renderTool)}</ToolRow>

      <Main>
        <Sidebar>
          <DockTitle title="Browser" />
          <DockTools>
            {["addSmall", "refresh", "filter", "collapse", "info"].map((n) => (
              <DockTool key={n}>
                <Icon name={n} size={16} />
              </DockTool>
            ))}
          </DockTools>
          <TreeBox>
            <TreeBody>
              {tree.map((r, i) => (
                <TreeRow key={i} $level={r.level} $selected={r.selected}>
                  <Expander>
                    {r.open && <TriDown />}
                    {r.closed && <TriRight />}
                  </Expander>
                  <TreeIcon>
                    <Icon name={r.icon} size={16} />
                  </TreeIcon>
                  {r.label}
                </TreeRow>
              ))}
            </TreeBody>
            <Scrollbar>
              <ScrollArrow>
                <UpTri />
              </ScrollArrow>
              <ScrollThumb />
              <ScrollFill />
              <ScrollArrow>
                <DownTri />
              </ScrollArrow>
            </Scrollbar>
          </TreeBox>
          <Splitter />
          <DockTitle title="Layers" />
          <DockTools>
            {["brush", "addGroup", "eye", "filterAdv", "epsilon", "v", "expand", "collapse", "removeLayer"].map((n) =>
              n === "v" ? (
                <ArrowBox key={n}>
                  <DropArrow />
                </ArrowBox>
              ) : (
                <DockTool key={n}>
                  <Icon name={n} size={16} />
                </DockTool>
              )
            )}
          </DockTools>
          <TreeBox $grow>
            <TreeBody>
              <LayerRow>
                <CheckBox>
                  <CheckMark />
                </CheckBox>
                <Swatch $color="#ff9800" />
                Doner
              </LayerRow>
              <LayerRow $selected>
                <CheckBox>
                  <CheckMark />
                </CheckBox>
                <Swatch $color="#a47270" />
                <u>Single_parts</u>
              </LayerRow>
            </TreeBody>
          </TreeBox>
        </Sidebar>
        <CanvasGap />
        <Canvas>
          <MapSvg viewBox="302 168 1049 757" preserveAspectRatio="none">
            <rect x="302" y="168" width="1050" height="758" fill="#fec97e" />
            <polygon points="302,168 326,168 318,172 302,184" fill="#fff" />
            <polygon points={orangeRing} fill="#fff" />
            <Parts x={740} y={450} list={partsA} />
            <Parts x={650} y={600} list={partsB} />
            <Parts x={760} y={320} list={partsC} />
            <path d="M796.500 530l1 13M715 672l8 3.500" stroke="#3d3d3d" strokeWidth="1" />
            <polygon points="853.500,637 858,631 860,634 857,641" fill="#fff" stroke="#3d3d3d" strokeWidth=".9" />
            <rect x="851.5" y="538.5" width="3" height="4.5" fill="#fff" stroke="#3d3d3d" strokeWidth=".6" />
          </MapSvg>
        </Canvas>
      </Main>

      <StatusBar>
        <Locator>
          <Search size={14} stroke="#888" />
          <span>Type to locate (Ctrl+K)</span>
        </Locator>
        <StatusLabel $w={54}>Coordinate</StatusLabel>
        <Field $w={103} $ml={4}>
          <FieldText>5202947,4926239</FieldText>
        </Field>
        <StatusIcon $w={17} $ml={2}>
          <svg width="16" height="16" viewBox="0 0 16 16">
            <circle cx="7" cy="9" r="5.5" fill="#fff" stroke="#333" strokeWidth="1.3" />
            <path d="M4 6l6 7M8 4l5 6M3 10l4 4" stroke="#333" strokeWidth="1.3" />
            <path d="M12 1l3 4" stroke="#777" />
          </svg>
        </StatusIcon>
        <StatusLabel $w={26} $ml={12}>Scale</StatusLabel>
        <Field $w={81} $ml={3}>
          <FieldText>1:8612</FieldText>
          <ComboDrop>
            <DownTri />
          </ComboDrop>
        </Field>
        <StatusIcon $w={16} $ml={10}>
          <Lock size={15} stroke="#666" fill="#888" />
        </StatusIcon>
        <StatusLabel $w={44} $ml={6}>Magnifier</StatusLabel>
        <Field $w={87} $ml={4}>
          <FieldText>100%</FieldText>
          <SpinCol>
            <UpTri />
            <DownTri />
          </SpinCol>
        </Field>
        <StatusLabel $w={42} $ml={9}>Rotation</StatusLabel>
        <Field $w={82} $ml={9}>
          <FieldText>0.0 °</FieldText>
          <SpinCol>
            <UpTri />
            <DownTri />
          </SpinCol>
        </Field>
        <RenderCheck>
          <CheckMark />
        </RenderCheck>
        <StatusLabel $w={35} $ml={5}>Render</StatusLabel>
        <StatusIcon $w={16} $ml={18}>
          <svg width="15" height="15" viewBox="0 0 24 24">
            <circle cx="12" cy="12" r="10.5" fill="#c8c8c8" stroke="#777" strokeWidth="1.6" />
            <path d="M1.500 12h21M12 1.500v21M4 6c4 2 12 2 16 0M4 18c4-2 12-2 16 0" stroke="#777" strokeWidth="1.4" fill="none" />
            <ellipse cx="12" cy="12" rx="5" ry="10.5" fill="none" stroke="#777" strokeWidth="1.4" />
          </svg>
        </StatusIcon>
        <StatusLabel $w={68} $ml={3}>Unknown CRS</StatusLabel>
        <StatusIcon $w={18} $ml={18}>
          <svg width="16" height="16" viewBox="0 0 16 16">
            <path d="M8 1c4.500 0 7 2.600 7 6s-2.500 6-7 6l-4 2.500.5-3.500C2 11 1 9.500 1 7c0-3.400 2.500-6 7-6z" fill="#666" />
            <circle cx="5" cy="7" r="1" fill="#fff" />
            <circle cx="8" cy="7" r="1" fill="#fff" />
            <circle cx="11" cy="7" r="1" fill="#fff" />
          </svg>
        </StatusIcon>
      </StatusBar>
    </Window>
  );
}
